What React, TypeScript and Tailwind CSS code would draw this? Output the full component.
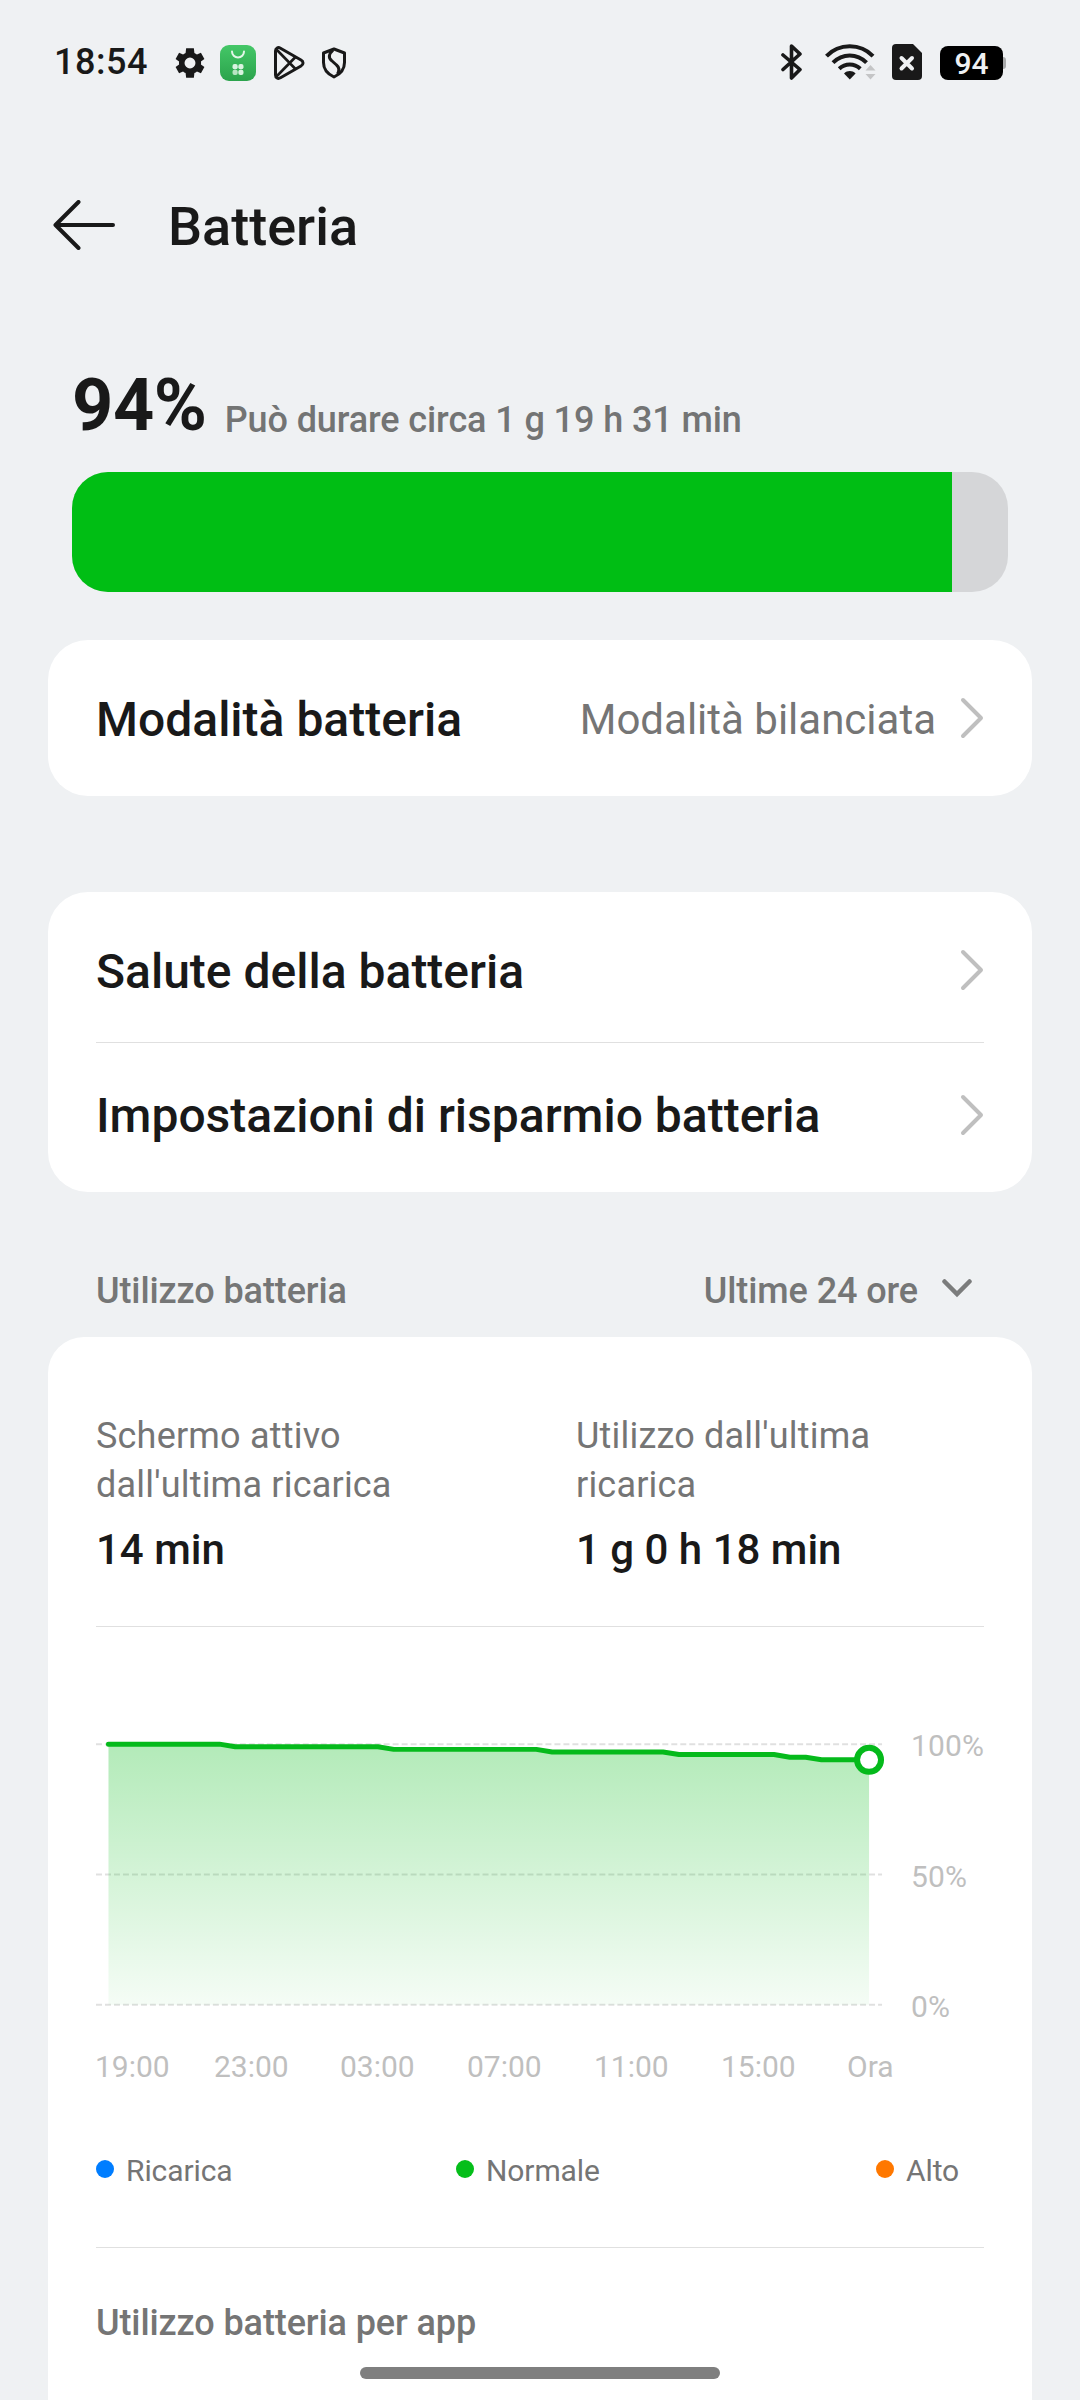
import type { ReactNode } from 'react';

const LEVEL = 94;

// battery level every half hour over the last day
const history = [
  ...Array(8).fill(100),
  ...Array(10).fill(99),
  ...Array(10).fill(98),
  ...Array(8).fill(97),
  ...Array(7).fill(96),
  ...Array(2).fill(95),
  ...Array(4).fill(94),
] as number[];

const hours = [
  { label: '19:00', cls: 'w-[119px]' },
  { label: '23:00', cls: 'w-[126px]' },
  { label: '03:00', cls: 'w-[127px]' },
  { label: '07:00', cls: 'w-[127px]' },
  { label: '11:00', cls: 'w-[127px]' },
  { label: '15:00', cls: 'w-[126px]' },
  { label: 'Ora', cls: '' },
];

function StatusBar() {
  return (
    <header className="flex h-[124px] items-center pl-[54px] pr-[74px] text-[#191919]">
      <span className="w-[98px] text-[36px] font-medium leading-none tracking-[0.5px]">18:54</span>
      <div className="mt-0.5 flex items-center">
        <svg className="ml-[22px]" width="32" height="32" viewBox="0 0 24 24" fill="currentColor">
          <path d="M20.3 12c0-.4 0-.8-.1-1.1l2.6-1.9-2.6-4.6-3 1.3c-.6-.5-1.2-.9-1.9-1.2L14.9 1H9.1l-.4 3.5c-.7.3-1.3.7-1.9 1.2l-3-1.3L1.2 9l2.6 1.9a8 8 0 0 0 0 2.2L1.2 15l2.6 4.6 3-1.3c.6.5 1.2.9 1.9 1.2l.4 3.5h5.8l.4-3.5c.7-.3 1.3-.7 1.9-1.2l3 1.3 2.6-4.6-2.6-1.9c.1-.3.1-.7.1-1.1zM12 16.1a4.1 4.1 0 1 1 0-8.2 4.1 4.1 0 0 1 0 8.2z" />
        </svg>
        <svg className="ml-[14px]" width="36" height="36" viewBox="0 0 36 36">
          <defs>
            <linearGradient id="store" x1="0" y1="0" x2="0" y2="1">
              <stop offset="0" stopColor="#44c767" />
              <stop offset="1" stopColor="#2ba34c" />
            </linearGradient>
          </defs>
          <rect width="36" height="36" rx="9" fill="url(#store)" />
          <path d="M12 6.5a6 6 0 0 0 12 0" fill="none" stroke="#e3f6e8" strokeWidth="2" strokeLinecap="round" />
          <g fill="#d9f3e0">
            <rect x="12.5" y="19" width="5.2" height="5.2" rx="2" />
            <rect x="18.3" y="19" width="5.2" height="5.2" rx="2" />
            <rect x="12.5" y="24.8" width="5.2" height="5.2" rx="2" opacity=".8" />
            <rect x="18.3" y="24.8" width="5.2" height="5.2" rx="2" />
          </g>
        </svg>
        <svg className="ml-[17px]" width="32" height="36" viewBox="0 0 32 36" fill="none" stroke="currentColor" strokeWidth="3" strokeLinejoin="round">
          <path d="M2.5 6v24c0 3 2.5 4.2 5 2.8L28 21c2.7-1.5 2.7-4.5 0-6L7.5 3.2C5 1.8 2.5 3 2.5 6z" />
          <path d="M3.5 4.5L22.5 24M3.5 31.5L22.5 12" strokeWidth="2.6" />
        </svg>
        <svg className="ml-4" width="26" height="32" viewBox="0 0 26 32" fill="none" stroke="currentColor" strokeWidth="3" strokeLinejoin="round">
          <path d="M13 2L23.5 6v9.5c0 6-4 11.5-10.5 14.5C6.5 27 2.5 21.5 2.5 15.5V6z" />
          <path d="M12 3c-4 3.5-5 7.5-1.5 10.5l5 4.5c3 2.5 3 5.5 1 9" />
        </svg>
      </div>

      <svg className="ml-auto" width="22" height="36" viewBox="0 0 22 36" fill="none" stroke="currentColor" strokeWidth="3.6" strokeLinecap="round" strokeLinejoin="round">
        <path d="M2 11l17 14.5-8.5 8.5V2L19 10 2 25.5" />
      </svg>
      <svg className="ml-[22px]" width="51" height="36" viewBox="0 0 51 36" fill="none" stroke="currentColor" strokeWidth="4">
        <path d="M1.5 12.2C14-1 35.5-1 48 12.2M8 18.7c9.5-9.6 24-9.6 33.5 0M14.2 24.7c6-5.7 15.1-5.7 21.1 0" />
        <path d="M19 29.5c3.6-3.2 8-3.2 11.6 0l-5.8 6z" fill="currentColor" stroke="none" />
        <path d="M40.5 26.5l5-5.5 5 5.5zM40.5 30l5 5.5 5-5.5z" fill="#c4c5c6" stroke="none" />
      </svg>
      <svg className="ml-4" width="30" height="36" viewBox="0 0 30 36">
        <path d="M4 0h17l9 9v23a4 4 0 0 1-4 4H4a4 4 0 0 1-4-4V4a4 4 0 0 1 4-4z" fill="currentColor" />
        <path d="M9.5 14L20 24.5M20 14L9.5 24.5" stroke="#eff1f3" strokeWidth="4" strokeLinecap="round" />
      </svg>
      <div className="ml-[18px] mt-0.5 flex items-center">
        <div className="flex h-[34px] w-[63px] items-center justify-center rounded-lg bg-black pt-px text-[30px] font-medium leading-none text-[#eff1f3]">
          {LEVEL}
        </div>
        <div className="h-3 w-[3px] rounded-r-full bg-[#a9aaab]" />
      </div>
    </header>
  );
}

function Chevron() {
  return (
    <svg className="shrink-0" width="24" height="42" viewBox="0 0 24 42" fill="none" stroke="#bfbfbf" strokeWidth="4" strokeLinecap="round" strokeLinejoin="round">
      <path d="M3 3l18 18L3 39" />
    </svg>
  );
}

function Row({ title, value }: { title: string; value?: string }) {
  return (
    <button className="flex w-full items-center text-left">
      <span className="flex-1 pt-[3px] text-[48px] font-medium leading-[56px] text-[#191919]">{title}</span>
      {value && <span className="mr-6 pt-[3px] text-[42px] leading-[50px] text-[#757575]">{value}</span>}
      <Chevron />
    </button>
  );
}

function Card({ className, children }: { className: string; children: ReactNode }) {
  return <section className={`mx-12 bg-white px-12 ${className}`}>{children}</section>;
}

function Stat({ label, value }: { label: ReactNode; value: string }) {
  return (
    <div>
      <div className="text-[36px] leading-[49px] tracking-[0.2px] text-[#757575]">{label}</div>
      <div className="mt-[15px] text-[42px] font-medium leading-[50px] text-[#191919]">{value}</div>
    </div>
  );
}

function Chart() {
  const top = 20;
  const height = 261;
  const points = history.map((v, i) => [12.5 + (i * 761.5) / 48, top + (height * (100 - v)) / 100]);
  const line = points.map(([x, y]) => `${x},${y}`).join(' ');
  const [endX, endY] = points[points.length - 1];

  return (
    <svg className="block" width="790" height="300" viewBox="0 0 790 300" fill="none">
      <defs>
        <linearGradient id="usage" gradientUnits="userSpaceOnUse" x1="0" y1={top} x2="0" y2={top + height}>
          <stop offset="0" stopColor="#00ba14" stopOpacity=".3" />
          <stop offset="1" stopColor="#00ba14" stopOpacity=".04" />
        </linearGradient>
      </defs>
      {[0, 0.5, 1].map((p) => (
        <path key={p} d={`M0 ${top + height * p}H787`} stroke="#000" strokeOpacity=".12" strokeWidth="2" strokeDasharray="6 3" />
      ))}
      <polygon points={`12.5,${top + height} ${line} ${endX},${top + height}`} fill="url(#usage)" />
      <polyline points={line} stroke="#05ba1b" strokeWidth="5" strokeLinecap="round" strokeLinejoin="round" />
      <circle cx={endX} cy={endY} r="12" fill="#fff" stroke="#05ba1b" strokeWidth="6" />
    </svg>
  );
}

function Legend({ color, label }: { color: string; label: string }) {
  return (
    <div className="flex items-start gap-3">
      <span className={`mt-[7px] size-[18px] rounded-full ${color}`} />
      <span className="text-[30px] leading-[36px] tracking-[-0.1px] text-[#757575]">{label}</span>
    </div>
  );
}

export default function App() {
  return (
    <div className="relative h-[2400px] w-[1080px] overflow-hidden bg-[#eff1f3] font-[Roboto,sans-serif]">
      <StatusBar />

      <div className="flex h-[204px] items-center pl-[53px]">
        <svg className="mb-0.5" width="62" height="50" viewBox="0 0 62 50" fill="none" stroke="#191919" strokeWidth="4" strokeLinecap="round" strokeLinejoin="round">
          <path d="M25.5 2l-23 23 23 23M3 25h57" />
        </svg>
        <h1 className="ml-[53px] pt-0.5 text-[54px] font-medium leading-[64px] text-[#191919]">Batteria</h1>
      </div>

      <div className="flex h-[144px] items-end px-[72px]">
        <span className="mb-[23px] text-[72px] font-bold leading-[86px] tracking-[-0.4px] text-[#191919]">{LEVEL}%</span>
        <span className="mb-[31px] ml-[18px] text-[36px] font-medium leading-[42px] tracking-[-0.1px] text-[#737474]">
          Può durare circa 1 g 19 h 31 min
        </span>
      </div>
      <div className="mx-[72px] h-[120px] overflow-hidden rounded-[36px] bg-[#d5d6d8]">
        <div className="h-full bg-[#00be14]" style={{ width: `${LEVEL}%` }} />
      </div>

      <Card className="mt-12 flex h-[156px] rounded-[40px]">
        <Row title="Modalità batteria" value="Modalità bilanciata" />
      </Card>

      <Card className="mt-24 grid h-[300px] grid-rows-[145px_143px] divide-y divide-[#e0e0e0] rounded-[40px] py-1.5">
        <Row title="Salute della batteria" />
        <Row title="Impostazioni di risparmio batteria" />
      </Card>

      <div className="mx-24 flex h-[145px] items-end justify-between pb-6 text-[36px] font-medium leading-[44px] tracking-[-0.1px] text-[#757676]">
        <span>Utilizzo batteria</span>
        <button className="flex items-center gap-6 pr-3">
          Ultime 24 ore
          <svg className="mb-1.5" width="30" height="20" viewBox="0 0 30 20" fill="none" stroke="#7b7c7c" strokeWidth="4.5" strokeLinecap="round">
            <path d="M2.5 3.5L15 16 27.5 3.5" />
          </svg>
        </button>
      </div>

      <Card className="h-[1100px] rounded-[36px] pt-[75px]">
        <div className="grid h-[215px] grid-cols-[480px_1fr] border-b border-[#e0e0e0]">
          <Stat label={<>Schermo attivo<br />dall'ultima ricarica</>} value="14 min" />
          <Stat label={<>Utilizzo dall'ultima<br />ricarica</>} value="1 g 0 h 18 min" />
        </div>

        <div className="mt-[97px] flex">
          <Chart />
          <div className="ml-[26px] flex h-[301px] flex-col justify-between pt-1 text-[30px] leading-[36px] tracking-[0.1px] text-[#bfbfbf]">
            <span>100%</span>
            <span>50%</span>
            <span>0%</span>
          </div>
        </div>
        <div className="-ml-px mt-6 flex text-[30px] leading-[36px] text-[#bfbfbf]">
          {hours.map((h) => (
            <span key={h.label} className={`shrink-0 ${h.cls}`}>{h.label}</span>
          ))}
        </div>

        <div className="mt-[68px] grid h-[95px] grid-cols-[360px_420px_1fr] border-b border-[#e0e0e0]">
          <Legend color="bg-[#007dff]" label="Ricarica" />
          <Legend color="bg-[#05be1a]" label="Normale" />
          <Legend color="bg-[#ff7800]" label="Alto" />
        </div>
        <h2 className="mt-[53px] text-[36px] font-medium leading-[44px] tracking-[-0.1px] text-[#757575]">Utilizzo batteria per app</h2>
      </Card>

      {/* Gesture bar */}
      <div className="absolute bottom-[21px] left-[360px] h-3 w-[360px] rounded-full bg-[#7f7f7f]" />
    </div>
  );
}
